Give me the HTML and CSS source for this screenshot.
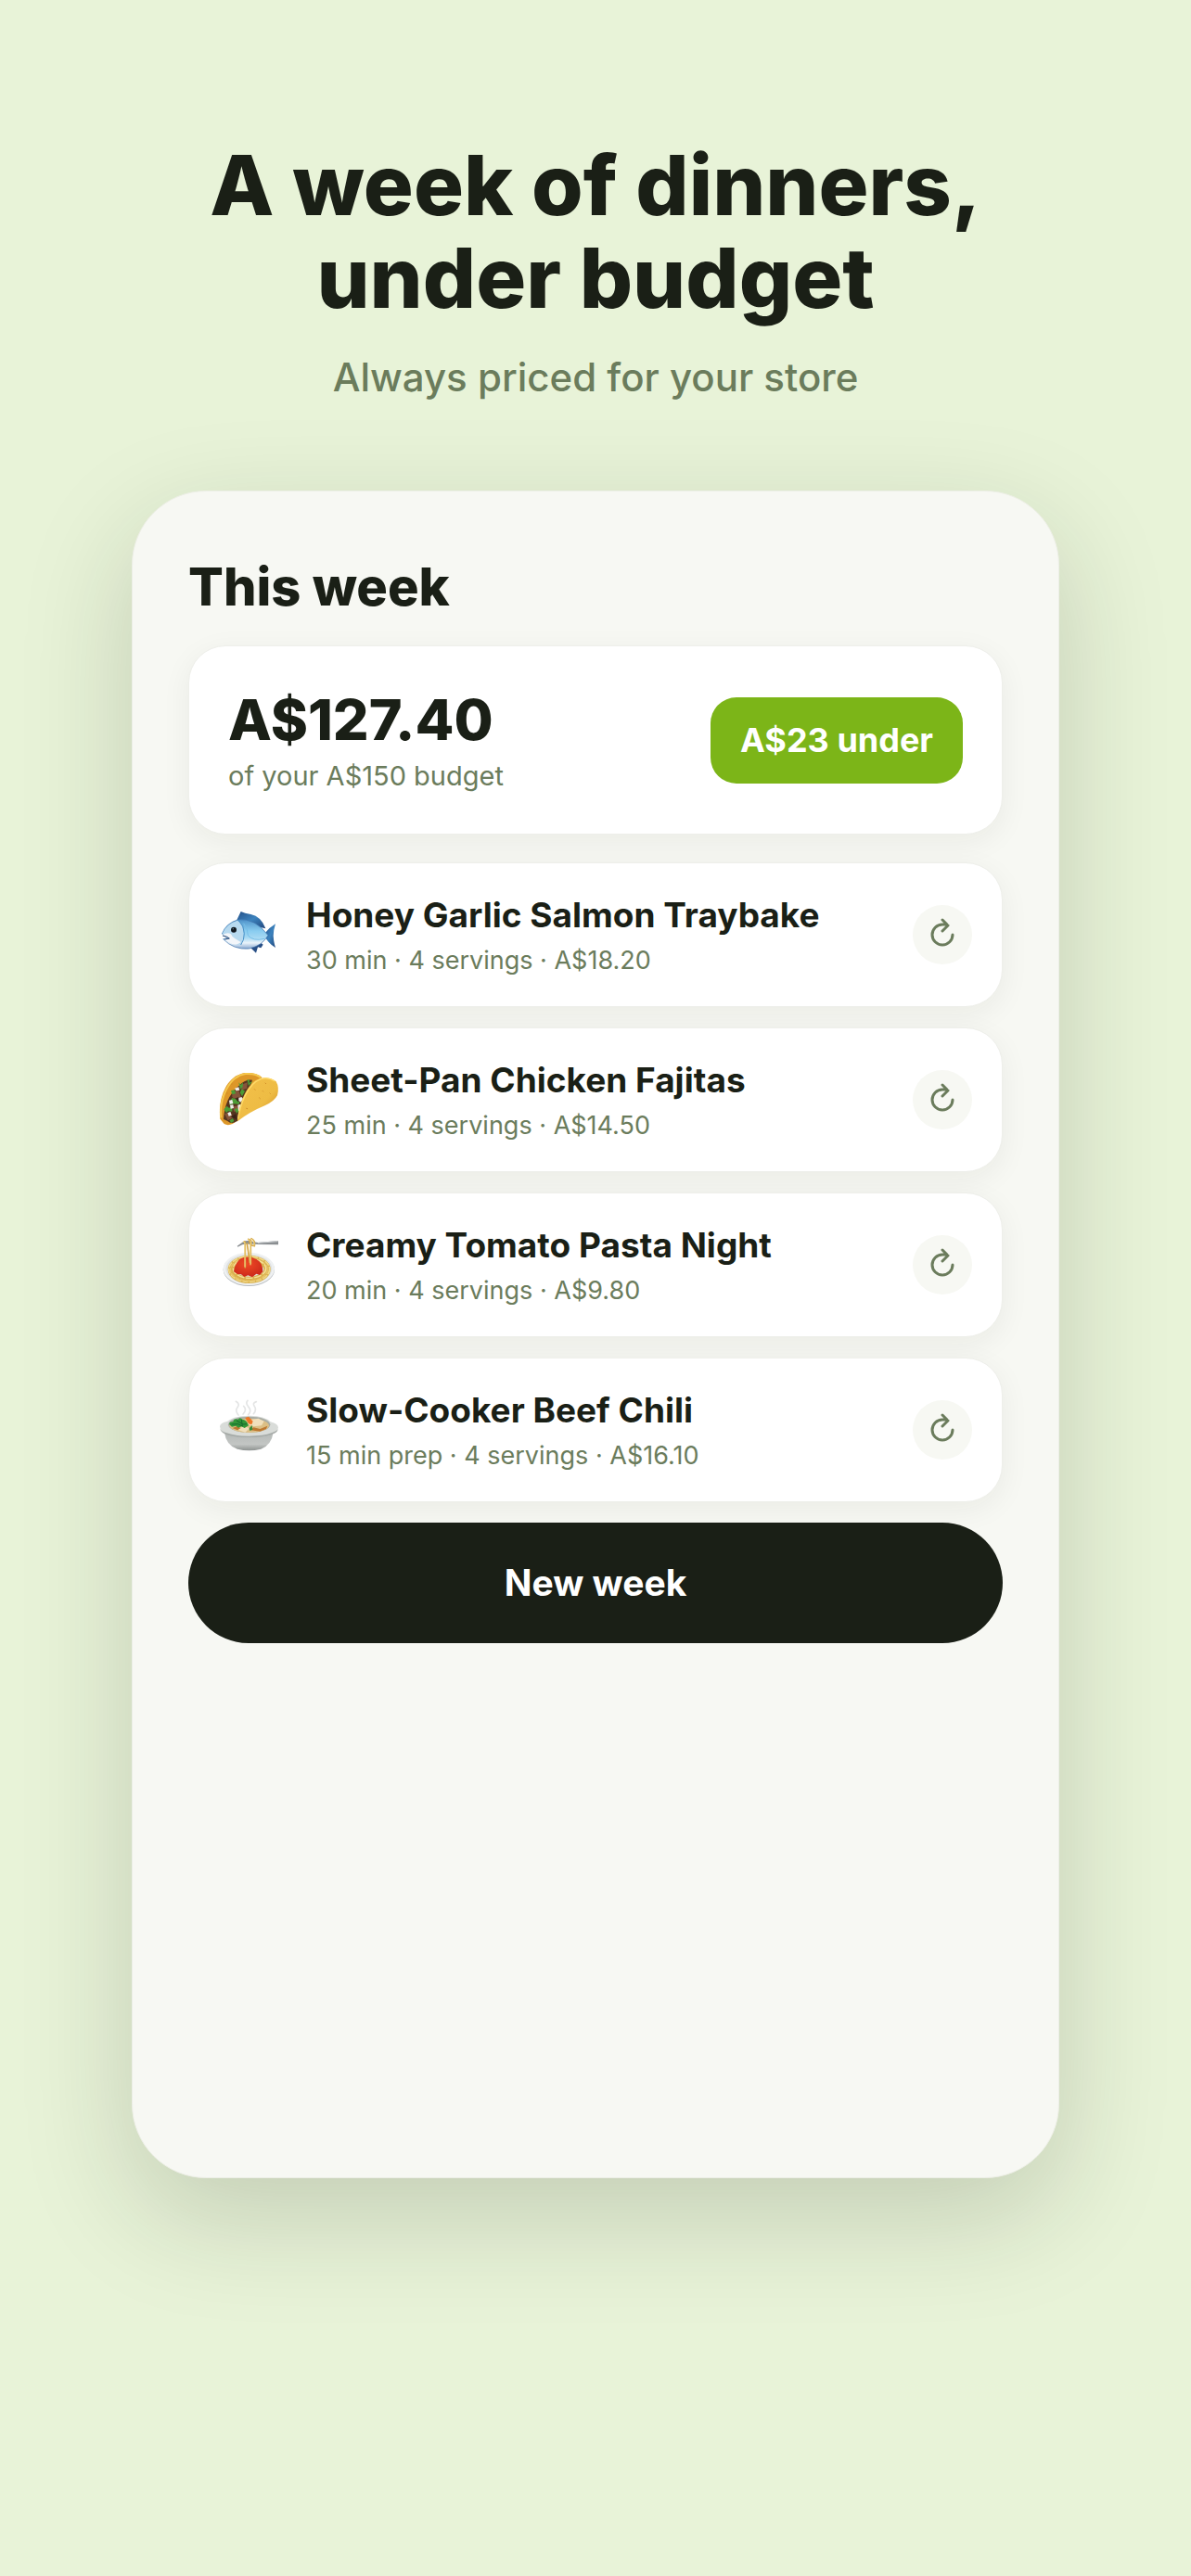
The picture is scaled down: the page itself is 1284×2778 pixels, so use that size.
FILE: index.html
```html
<!DOCTYPE html>
<html lang="en">
<head>
    <meta charset="UTF-8">
    <meta name="viewport" content="width=device-width, initial-scale=1.0">
    <title>A week of dinners, under budget</title>
    <link rel="stylesheet" href="styles.css">
</head>
<body>

    <header class="hero">
        <h1>A week of dinners,<br>under budget</h1>
        <p>Always priced for your store</p>
    </header>

    <main class="phone">
        <h2>This week</h2>

        <!-- Budget summary -->
        <section class="card summary">
            <div>
                <p class="total">A$127.40</p>
                <p class="budget">of your A$150 budget</p>
            </div>
            <span class="badge">A$23 under</span>
        </section>

        <!-- Meals -->
        <ul class="meals">
            <li class="card meal">
                <svg class="meal-icon" viewBox="48 45 198 198" aria-hidden="true">
                    <defs>
                        <linearGradient id="fish-body" x1="0" y1="0" x2="0" y2="1">
                            <stop offset="0" stop-color="#4d91c9"/>
                            <stop offset=".4" stop-color="#8acdf0"/>
                            <stop offset=".62" stop-color="#a5d8f3"/>
                            <stop offset=".8" stop-color="#eaf3fa"/>
                            <stop offset="1" stop-color="#88a8d0"/>
                        </linearGradient>
                        <linearGradient id="fish-fin" x1="0" y1="0" x2="1" y2="1">
                            <stop offset="0" stop-color="#244f88"/>
                            <stop offset=".5" stop-color="#3c83be"/>
                            <stop offset="1" stop-color="#21467c"/>
                        </linearGradient>
                    </defs>
                    <path d="M106 96L119 69Q131 75 151 78Q185 85 199 124L170 118Z" fill="url(#fish-fin)"/>
                    <path d="M196 140Q212 120 231 109Q224 130 224 148Q225 168 231 186Q212 175 200 156Z" fill="url(#fish-fin)"/>
                    <path d="M148 184L168 203L174 184L184 187L191 176L184 170Z" fill="#284f86"/>
                    <path d="M58 141Q72 105 112 95Q165 90 207 146Q188 180 146 189Q96 194 62 158L76 155Z" fill="url(#fish-body)" stroke="#3c6fa9" stroke-width="2"/>
                    <path d="M60 141Q71 109 108 98Q128 111 128 140Q128 162 117 176Q84 178 66 159L82 157L74 149Z" fill="#b7d9ef"/>
                    <path d="M60 144Q84 132 91 149Q104 160 119 168Q102 186 67 161L82 157Z" fill="#f3f6fa"/>
                    <path d="M112 98Q130 116 130 140Q130 162 119 177" fill="none" stroke="#4c92c8" stroke-width="3"/>
                    <path d="M128 107Q143 129 142 146Q157 166 196 157" fill="none" stroke="#74bde7" stroke-width="3"/>
                    <path d="M60 147L74 151L82 156L67 159" fill="none" stroke="#294875" stroke-width="3"/>
                    <circle cx="96" cy="128" r="9" fill="#111820"/>
                    <circle cx="94" cy="125" r="2" fill="#71889a"/>
                </svg>
                <div class="meal-text">
                    <h3>Honey Garlic Salmon Traybake</h3>
                    <p>30 min · 4 servings · A$18.20</p>
                </div>
                <button class="swap" type="button" aria-label="Swap Honey Garlic Salmon Traybake">
                    <svg viewBox="0 0 32 32" aria-hidden="true"><path d="M27 16A11 11 0 1 1 16 5H21M16 0L22 6L16 12"/></svg>
                </button>
            </li>
            <li class="card meal">
                <svg class="meal-icon" viewBox="48 54 198 198" aria-hidden="true">
                    <defs>
                        <linearGradient id="taco-shell" x1="0" y1="0" x2="1" y2="1">
                            <stop offset="0" stop-color="#f3c04a"/>
                            <stop offset=".6" stop-color="#eebc44"/>
                            <stop offset="1" stop-color="#cb8722"/>
                        </linearGradient>
                    </defs>
                    <path d="M52 215C44 150 72 75 132 66Q171 64 187 80L110 218Q84 242 65 231Z" fill="#dd9728"/>
                    <path d="M55 211C49 151 79 77 134 69Q168 67 183 81" fill="none" stroke="#f6c84d" stroke-width="6"/>
                    <path d="M63 216Q67 145 112 108Q134 84 156 89L116 215Q91 237 76 222Z" fill="#55341f"/>
                    <path d="M91 129L111 121L119 143L104 155L91 144ZM119 105L140 97L139 116L122 122ZM66 198L86 193L94 211L77 220ZM94 175L114 170L111 190L96 191Z" fill="#85553a"/>
                    <path d="M98 149L111 145L116 158L102 163ZM86 208L103 199L105 217Z" fill="#3a2116"/>
                    <path d="M112 97L119 105L126 97L125 112L117 119ZM139 88L148 89L145 98L157 94L144 108ZM87 124L98 121L103 133L91 136ZM116 130L122 118L132 125L123 142ZM90 147L102 150L110 160L116 155L113 168L97 166L81 170ZM64 184L74 173L80 179L91 177L91 191L78 190L72 195ZM98 184L107 180L113 188L106 197ZM82 220L93 213L97 222L88 228Z" fill="#4c9b36"/>
                    <path d="M99 116L112 112L115 122L103 124ZM112 147L121 144L127 151L119 161L112 156ZM81 155L91 153L94 165L83 167ZM84 170L94 169L96 180L86 182ZM109 170L119 167L118 188L111 190ZM76 196L85 192L89 203L80 206Z" fill="#efefeb"/>
                    <path d="M108 221C112 170 139 94 181 84Q209 76 233 94Q244 113 237 139Q227 158 198 171Q145 193 108 223Z" fill="url(#taco-shell)"/>
                    <path d="M110 215C117 165 142 102 183 86Q208 79 229 93" fill="none" stroke="#ffdb6a" stroke-width="4"/>
                    <path d="M163 119L165 121M198 99L200 101M213 132L214 133M179 147L181 149M137 181L140 182M190 125L191 126M74 130L75 133M89 103L91 102" stroke="#cf8c27" stroke-width="3" stroke-linecap="round"/>
                </svg>
                <div class="meal-text">
                    <h3>Sheet-Pan Chicken Fajitas</h3>
                    <p>25 min · 4 servings · A$14.50</p>
                </div>
                <button class="swap" type="button" aria-label="Swap Sheet-Pan Chicken Fajitas">
                    <svg viewBox="0 0 32 32" aria-hidden="true"><path d="M27 16A11 11 0 1 1 16 5H21M16 0L22 6L16 12"/></svg>
                </button>
            </li>
            <li class="card meal">
                <svg class="meal-icon" viewBox="48 63 198 198" aria-hidden="true">
                    <defs>
                        <radialGradient id="sauce" cx=".45" cy=".35" r=".7">
                            <stop offset="0" stop-color="#ef4a25"/>
                            <stop offset="1" stop-color="#c9261a"/>
                        </radialGradient>
                    </defs>
                    <ellipse cx="145" cy="178" rx="83" ry="53" fill="#b8bcc0"/>
                    <ellipse cx="145" cy="175" rx="83" ry="53" fill="#eff1f2"/>
                    <ellipse cx="145" cy="175" rx="75" ry="47" fill="#dfe2e4"/>
                    <ellipse cx="146" cy="177" rx="58" ry="34" fill="none" stroke="#d9b04e" stroke-width="22"/>
                    <ellipse cx="146" cy="176" rx="66" ry="41" fill="none" stroke="#f0d887" stroke-width="5" stroke-dasharray="18 4"/>
                    <ellipse cx="145" cy="178" rx="60" ry="36" fill="none" stroke="#e8c367" stroke-width="5" stroke-dasharray="15 3"/>
                    <ellipse cx="147" cy="174" rx="53" ry="31" fill="none" stroke="#f5e09a" stroke-width="4" stroke-dasharray="23 5"/>
                    <path d="M96 184Q98 161 116 143Q142 130 169 144Q190 154 190 184L180 195L169 191L156 202L142 196L130 201L120 193L108 192Z" fill="url(#sauce)"/>
                    <path d="M107 101L126 88Q139 81 152 86L174 90L240 84V97L178 96Q154 94 145 95Q126 93 109 104Z" fill="#8a8e91"/>
                    <path d="M174 91L239 86" stroke="#d2d5d7" stroke-width="3"/>
                    <path d="M129 88Q133 83 133 98V170M139 93L148 154M143 79Q158 82 151 98V158M153 77Q166 83 163 101Q145 99 146 82" fill="none" stroke="#d3a545" stroke-width="5" stroke-linecap="round"/>
                    <path d="M128 88Q132 84 132 98V168M143 80Q156 84 150 98V162M153 78Q164 84 162 99" fill="none" stroke="#f4da85" stroke-width="3" stroke-linecap="round"/>
                </svg>
                <div class="meal-text">
                    <h3>Creamy Tomato Pasta Night</h3>
                    <p>20 min · 4 servings · A$9.80</p>
                </div>
                <button class="swap" type="button" aria-label="Swap Creamy Tomato Pasta Night">
                    <svg viewBox="0 0 32 32" aria-hidden="true"><path d="M27 16A11 11 0 1 1 16 5H21M16 0L22 6L16 12"/></svg>
                </button>
            </li>
            <li class="card meal">
                <svg class="meal-icon" viewBox="48 57 198 198" aria-hidden="true">
                    <defs>
                        <linearGradient id="pot" x1="0" y1="0" x2="0" y2="1">
                            <stop offset="0" stop-color="#b4b8b6"/>
                            <stop offset=".65" stop-color="#c3c6c4"/>
                            <stop offset="1" stop-color="#8d9290"/>
                        </linearGradient>
                    </defs>
                    <path d="M111 108Q99 94 108 83T103 64M126 105Q140 91 128 79M143 107Q155 94 144 82T141 61M160 104Q171 91 163 80T169 65" fill="none" stroke="#e4e5e5" stroke-width="5" stroke-linecap="round"/>
                    <path d="M66 164Q71 206 108 218Q145 228 184 218Q218 205 224 164Z" fill="url(#pot)"/>
                    <path d="M51 145Q52 133 76 128Q95 111 145 110Q194 109 215 130Q239 136 240 148Q238 166 219 168Q198 179 145 179Q91 179 72 168Q53 163 51 145Z" fill="#d9dcd9"/>
                    <path d="M52 152Q56 161 73 166Q98 176 145 176Q193 176 218 166Q236 160 239 153Q238 166 219 170Q192 180 145 180Q97 180 70 170Q53 163 52 152Z" fill="#a5aaa7"/>
                    <ellipse cx="146" cy="139" rx="68" ry="26" fill="#a9ada5"/>
                    <ellipse cx="146" cy="142" rx="64" ry="23" fill="#dcbf85"/>
                    <path d="M139 137L151 123L176 119L194 128L186 142L161 145ZM114 150L132 145L147 151L133 164L110 156Z" fill="#f1dfbb"/>
                    <path d="M151 157L160 148L181 153L205 143L201 153L181 161ZM92 150L106 145L119 150L108 157Z" fill="#bd7830"/>
                    <path d="M133 117L144 113L158 128L154 139L144 136Z" fill="#ed7727"/>
                    <path d="M82 139Q80 129 94 130Q96 118 110 122Q116 113 124 122Q140 125 144 142L131 150L121 145L111 149L103 143L90 146Z" fill="#319638"/>
                    <path d="M89 138L110 137L124 144M105 126L126 138L138 137M121 123L124 144" fill="none" stroke="#15682d" stroke-width="3"/>
                    <path d="M146 151L155 141L157 155L148 159Z" fill="#388b37"/>
                </svg>
                <div class="meal-text">
                    <h3>Slow-Cooker Beef Chili</h3>
                    <p>15 min prep · 4 servings · A$16.10</p>
                </div>
                <button class="swap" type="button" aria-label="Swap Slow-Cooker Beef Chili">
                    <svg viewBox="0 0 32 32" aria-hidden="true"><path d="M27 16A11 11 0 1 1 16 5H21M16 0L22 6L16 12"/></svg>
                </button>
            </li>
        </ul>

        <button class="new-week" type="button">New week</button>
    </main>

</body>
</html>
```

FILE: styles.css
```css
* {
    margin: 0;
    padding: 0;
    box-sizing: border-box;
}

body {
    font-family: Inter, 'Liberation Sans', sans-serif;
    background-color: #e8f3d8;
    color: #1a1f16;
    display: flex;
    flex-direction: column;
    align-items: center;
    gap: 96px;
    min-height: 100vh;
    padding: 150px 24px 120px;
}

.hero {
    text-align: center;
}

.hero h1 {
    font-size: 90px;
    font-weight: 800;
    line-height: 100px;
}

.hero p {
    margin-top: 30px;
    font-size: 42px;
    font-weight: 500;
    line-height: 53px;
    color: #6b7c5c;
}

.phone {
    display: flex;
    flex-direction: column;
    width: 100%;
    max-width: 1000px;
    min-height: 1820px;
    padding: 68px 60px;
    background-color: #f7f8f3;
    border: 1px solid #edefe6;
    border-radius: 80px;
    box-shadow: 0 40px 120px rgba(26, 31, 22, 0.18);
}

.phone h2 {
    font-size: 56px;
    font-weight: 800;
    line-height: 70px;
    margin-bottom: 28px;
}

.card {
    display: flex;
    align-items: center;
    background-color: white;
    border: 1px solid #eeefea;
    border-radius: 40px;
    box-shadow: 0 8px 32px rgba(26, 31, 22, 0.06);
}

.summary {
    justify-content: space-between;
    padding: 40px 42px;
    margin-bottom: 30px;
}

.total {
    font-size: 61px;
    font-weight: 800;
    line-height: 78px;
}

.budget {
    font-size: 29px;
    line-height: 44px;
    color: #6b7c5c;
}

.badge {
    padding: 24px 32px;
    background-color: #7cb518;
    border-radius: 28px;
    color: white;
    font-size: 36px;
    font-weight: 700;
    line-height: 45px;
}

.meals {
    display: flex;
    flex-direction: column;
    gap: 22px;
    margin-bottom: 22px;
    list-style: none;
}

.meal {
    gap: 28px;
    padding: 28px 32px;
}

.meal-icon {
    width: 66px;
    height: 66px;
    flex-shrink: 0;
}

.meal-text {
    flex: 1;
}

.meal h3 {
    font-size: 37px;
    font-weight: 700;
    line-height: 56px;
}

.meal p {
    font-size: 27px;
    line-height: 42px;
    color: #6b7c5c;
}

.swap {
    display: flex;
    align-items: center;
    justify-content: center;
    width: 64px;
    height: 64px;
    border: none;
    border-radius: 50%;
    background-color: #f7f8f3;
    cursor: pointer;
}

.swap svg {
    width: 32px;
    height: 32px;
    overflow: visible;
    fill: none;
    stroke: #6b7c5c;
    stroke-width: 3;
    stroke-linecap: round;
    stroke-linejoin: round;
}

.new-week {
    padding: 40px;
    border: none;
    border-radius: 65px;
    background-color: #1a1f16;
    color: white;
    font-family: inherit;
    font-size: 39px;
    font-weight: 700;
    line-height: 50px;
    cursor: pointer;
}
```
